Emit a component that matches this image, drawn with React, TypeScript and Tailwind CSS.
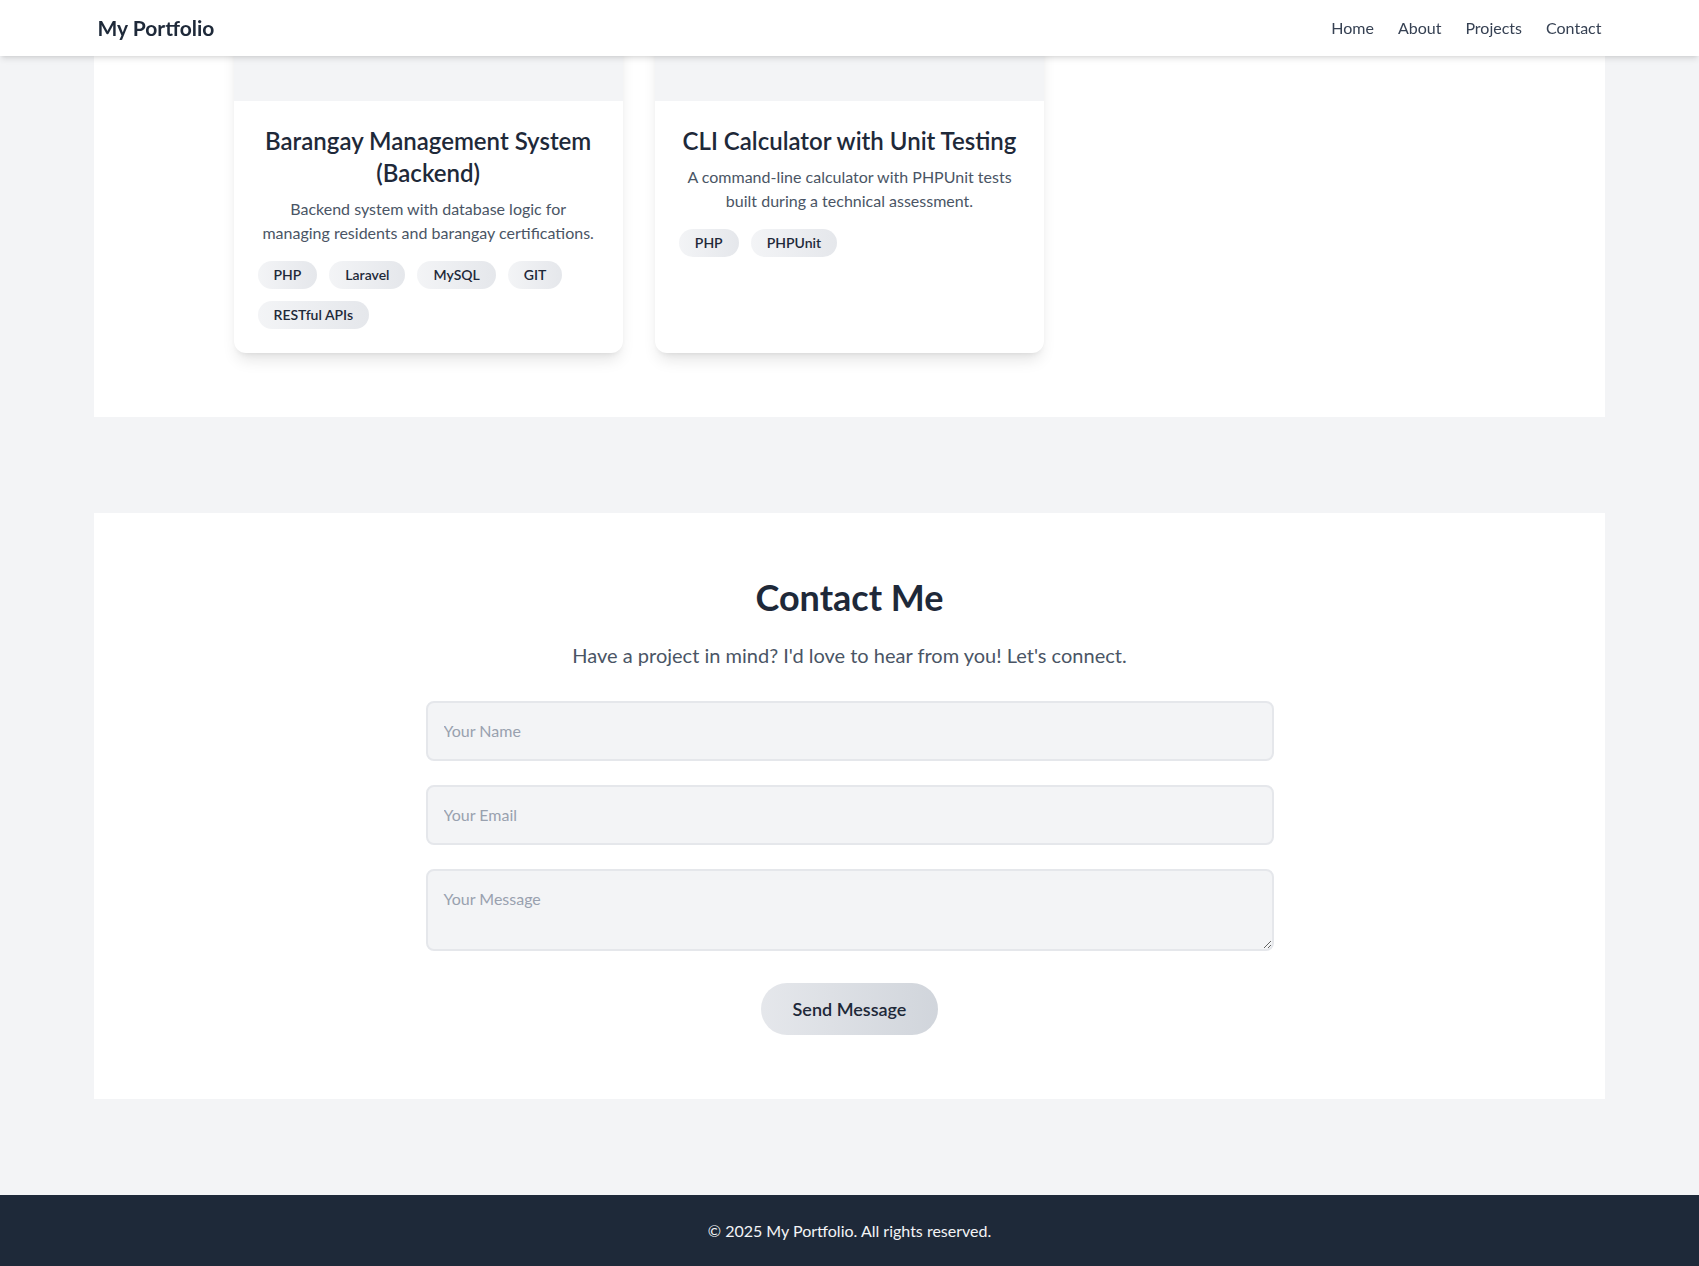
import React from "react";

type Project = {
  title: string;
  description: string;
  tags: string[];
};

const projects: Project[] = [
  {
    title: "Barangay Management System (Backend)",
    description:
      "Backend system with database logic for managing residents and barangay certifications.",
    tags: ["PHP", "Laravel", "MySQL", "GIT", "RESTful APIs"],
  },
  {
    title: "CLI Calculator with Unit Testing",
    description:
      "A command-line calculator with PHPUnit tests built during a technical assessment.",
    tags: ["PHP", "PHPUnit"],
  },
];

function Navbar() {
  return (
    <header className="fixed top-0 left-0 right-0 z-20 h-14 bg-white shadow-md">
      <div className="mx-auto flex h-full max-w-[1536px] items-center justify-between px-4">
        <span className="text-[21px] font-bold text-gray-800">My Portfolio</span>
        <nav className="flex items-center gap-6 text-base text-gray-700">
          <a href="#home">Home</a>
          <a href="#about">About</a>
          <a href="#projects">Projects</a>
          <a href="#contact">Contact</a>
        </nav>
      </div>
    </header>
  );
}

function ProjectCard({ project }: { project: Project }) {
  return (
    <div className="flex flex-col overflow-hidden rounded-xl bg-white shadow-lg">
      {/* image placeholder */}
      <div className="h-[101px] bg-gray-100" />
      <div className="p-6 text-center">
        <h3 className="mb-2 text-2xl font-semibold text-gray-800">
          {project.title}
        </h3>
        <p className="mb-4 text-base text-gray-600">{project.description}</p>
        <div className="flex flex-wrap gap-3">
          {project.tags.map((tag) => (
            <span
              key={tag}
              className="rounded-full bg-gradient-to-r from-gray-100 to-gray-200 px-4 py-1 text-sm font-semibold text-gray-800"
            >
              {tag}
            </span>
          ))}
        </div>
      </div>
    </div>
  );
}

export default function App() {
  return (
    <div className="min-h-screen bg-gray-100 font-['Lato',sans-serif]">
      <Navbar />

      {/* Projects */}
      <section id="projects" className="mx-auto w-[1511px] bg-white pb-16">
        <div className="mx-auto grid max-w-7xl grid-cols-3 gap-8 px-6">
          {projects.map((p) => (
            <ProjectCard key={p.title} project={p} />
          ))}
        </div>
      </section>

      {/* Contact */}
      <section id="contact" className="mx-auto mt-24 w-[1511px] bg-white py-16">
        <div className="mx-auto max-w-4xl px-6 text-center">
          <h2 className="mb-6 text-4xl font-bold text-gray-800">Contact Me</h2>
          <p className="mb-8 text-xl text-gray-600">
            Have a project in mind? I'd love to hear from you! Let's connect.
          </p>
          <form className="flex flex-col" onSubmit={(e) => e.preventDefault()}>
            <input
              type="text"
              placeholder="Your Name"
              className="mb-6 w-full rounded-lg border-2 border-gray-200 bg-gray-100 p-4 text-base text-gray-800 placeholder:text-gray-400 focus:outline-none"
            />
            <input
              type="email"
              placeholder="Your Email"
              className="mb-6 w-full rounded-lg border-2 border-gray-200 bg-gray-100 p-4 text-base text-gray-800 placeholder:text-gray-400 focus:outline-none"
            />
            <textarea
              placeholder="Your Message"
              className="mb-8 h-[82px] w-full rounded-lg border-2 border-gray-200 bg-gray-100 p-4 text-base text-gray-800 placeholder:text-gray-400 focus:outline-none"
            />
            <div>
              <button
                type="submit"
                className="rounded-full bg-gradient-to-r from-gray-200 to-gray-300 px-8 py-3 text-lg font-semibold text-gray-800"
              >
                Send Message
              </button>
            </div>
          </form>
        </div>
      </section>

      <footer className="mt-24 bg-gray-800 py-6 text-center text-base text-gray-100">
        © 2025 My Portfolio. All rights reserved.
      </footer>
    </div>
  );
}
